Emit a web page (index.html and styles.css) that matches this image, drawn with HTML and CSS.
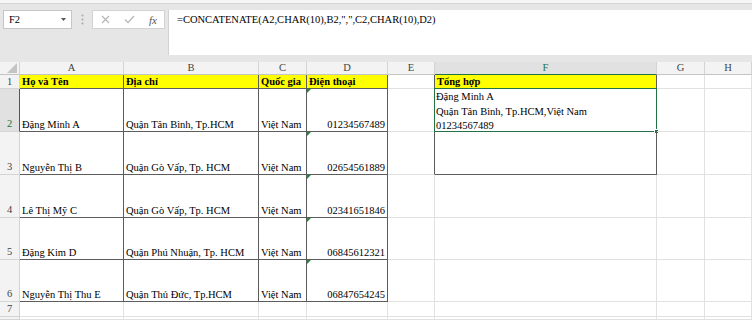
FILE: index.html
```html
<!DOCTYPE html>
<html lang="vi">
<head>
  <meta charset="UTF-8">
  <title>Tổng hợp - CONCATENATE</title>
  <link rel="stylesheet" href="styles.css">
</head>
<body>
  <div class="ribbon"></div>

  <div class="formula-row">
    <div class="namebox">
      <span>F2</span>
      <svg width="5" height="3" viewBox="0 0 5 3"><path d="M0 0h5L2.5 3z" fill="#555"/></svg>
    </div>
    <div class="dots">
      <svg width="3" height="11" viewBox="0 0 3 11">
        <circle cx="1.5" cy="1.5" r="1" fill="#a8a8a8"/>
        <circle cx="1.5" cy="5.5" r="1" fill="#a8a8a8"/>
        <circle cx="1.5" cy="9.5" r="1" fill="#a8a8a8"/>
      </svg>
    </div>
    <div class="fx-btns">
      <svg width="9" height="9" viewBox="0 0 9 9"><path d="M1 1l7 7M8 1L1 8" stroke="#b4b4b4" stroke-width="1.1" fill="none"/></svg>
      <svg width="11" height="9" viewBox="0 0 11 9"><path d="M1 4.5l3 3.2L10 1" stroke="#b4b4b4" stroke-width="1.2" fill="none"/></svg>
      <span class="fx">fx</span>
    </div>
    <div class="formula">=CONCATENATE(A2,CHAR(10),B2,",",C2,CHAR(10),D2)</div>
  </div>

  <div class="sheet">
    <!-- column headers -->
    <div class="h corner">
      <svg width="11" height="10" viewBox="0 0 11 10"><path d="M10 0v10H0z" fill="#c4c4c4"/></svg>
    </div>
    <div class="h">A</div>
    <div class="h">B</div>
    <div class="h">C</div>
    <div class="h">D</div>
    <div class="h">E</div>
    <div class="h sel">F</div>
    <div class="h">G</div>
    <div class="h">H</div>

    <!-- row 1 -->
    <div class="rh mid">1</div>
    <div class="c tb y">Họ và Tên</div>
    <div class="c tb y">Địa chỉ</div>
    <div class="c tb y">Quốc gia</div>
    <div class="c tb y">Điện thoại</div>
    <div class="c edge"></div>
    <div class="c tb y">Tổng hợp</div>
    <div class="c"></div>
    <div class="c"></div>

    <!-- row 2 -->
    <div class="rh sel">2</div>
    <div class="c tb">Đặng Minh A</div>
    <div class="c tb">Quận Tân Bình, Tp.HCM</div>
    <div class="c tb">Việt Nam</div>
    <div class="c tb num">01234567489</div>
    <div class="c edge"></div>
    <div class="c tb wrap">
      Đặng Minh A<br>Quận Tân Bình, Tp.HCM,Việt Nam<br>01234567489
      <div class="selbox"><div class="handle"></div></div>
    </div>
    <div class="c"></div>
    <div class="c"></div>

    <!-- row 3 -->
    <div class="rh">3</div>
    <div class="c tb">Nguyễn Thị B</div>
    <div class="c tb">Quận Gò Vấp, Tp. HCM</div>
    <div class="c tb">Việt Nam</div>
    <div class="c tb num">02654561889</div>
    <div class="c edge"></div>
    <div class="c tb"></div>
    <div class="c"></div>
    <div class="c"></div>

    <!-- row 4 -->
    <div class="rh">4</div>
    <div class="c tb">Lê Thị Mỹ C</div>
    <div class="c tb">Quận Gò Vấp, Tp. HCM</div>
    <div class="c tb">Việt Nam</div>
    <div class="c tb num">02341651846</div>
    <div class="c"></div>
    <div class="c"></div>
    <div class="c"></div>
    <div class="c"></div>

    <!-- row 5 -->
    <div class="rh">5</div>
    <div class="c tb">Đặng Kim D</div>
    <div class="c tb">Quận Phú Nhuận, Tp. HCM</div>
    <div class="c tb">Việt Nam</div>
    <div class="c tb num">06845612321</div>
    <div class="c"></div>
    <div class="c"></div>
    <div class="c"></div>
    <div class="c"></div>

    <!-- row 6 -->
    <div class="rh">6</div>
    <div class="c tb">Nguyễn Thị Thu E</div>
    <div class="c tb">Quận Thủ Đức, Tp.HCM</div>
    <div class="c tb">Việt Nam</div>
    <div class="c tb num">06847654245</div>
    <div class="c"></div>
    <div class="c"></div>
    <div class="c"></div>
    <div class="c"></div>

    <!-- row 7 -->
    <div class="rh mid">7</div>
    <div class="c"></div>
    <div class="c"></div>
    <div class="c"></div>
    <div class="c"></div>
    <div class="c"></div>
    <div class="c"></div>
    <div class="c"></div>
    <div class="c"></div>

    <!-- row 8 (cut off) -->
    <div class="rh"></div>
    <div class="c"></div>
    <div class="c"></div>
    <div class="c"></div>
    <div class="c"></div>
    <div class="c"></div>
    <div class="c"></div>
    <div class="c"></div>
    <div class="c"></div>
  </div>
</body>
</html>
```

FILE: styles.css
```css
* {
  box-sizing: border-box;
}

body {
  margin: 0;
  width: 752px;
  height: 320px;
  overflow: hidden;
  background-color: #fff;
  color: #000;
  font-family: "Liberation Serif", "Times New Roman", serif;
  font-size: 10.5px;
}

/* bottom edge of the ribbon */
.ribbon {
  height: 4px;
  background-color: #f6f6f6;
  border-bottom: 1px solid #d6d6d6;
}

/* name box + formula bar */
.formula-row {
  display: flex;
  align-items: flex-start;
  height: 58px;
  padding: 6px 0 0 3px;
  background-color: #e6e6e6;
}

.namebox {
  display: flex;
  align-items: center;
  justify-content: space-between;
  width: 69px;
  height: 19px;
  padding: 0 5px;
  background-color: #fff;
  border: 1px solid #c6c6c6;
}

.dots {
  display: flex;
  align-items: center;
  justify-content: center;
  width: 20px;
  height: 19px;
}

.fx-btns {
  display: grid;
  grid-template-columns: 24px 24px 24px;
  align-items: center;
  justify-items: center;
  width: 73px;
  height: 19px;
  background-color: #fff;
  border: 1px solid #d2d2d2;
}

.fx {
  font-style: italic;
  font-size: 11px;
  color: #555;
}

.formula {
  flex: 1;
  height: 45px;
  margin-left: 3px;
  padding: 3px 0 0 8px;
  line-height: 14px;
  background-color: #fff;
  border-left: 1px solid #d2d2d2;
  white-space: nowrap;
}

/* worksheet grid */
.sheet {
  display: grid;
  grid-template-columns: 20px 104px 135px 48px 81px 47px 222px 48px 1fr;
  grid-template-rows: 13px 14px 43px 43px 43px 42px 42px 15px 1fr;
  height: 258px;
}

.h {
  text-align: center;
  line-height: 12px;
  color: #444;
  background-color: #f3f3f3;
  border-right: 1px solid #d4d4d4;
  border-bottom: 1px solid #c4c4c4;
}

.h.sel {
  color: #217346;
  background-color: #e1e1e1;
  border-bottom-color: #217346;
}

.corner {
  display: flex;
  align-items: flex-end;
  justify-content: flex-end;
  padding: 0 1px 1px 0;
}

.rh {
  display: flex;
  align-items: flex-end;
  justify-content: center;
  line-height: 14px;
  color: #444;
  background-color: #f3f3f3;
  border-right: 1px solid #d4d4d4;
  border-bottom: 1px solid #d4d4d4;
}

.rh.mid {
  align-items: center;
  line-height: 12px;
}

.rh.sel {
  color: #217346;
  background-color: #e1e1e1;
  border-right-color: #217346;
}

.c {
  position: relative;
  display: flex;
  align-items: flex-end;
  padding: 0 2px;
  line-height: 13px;
  white-space: nowrap;
  border-right: 1px solid #e1e1e1;
  border-bottom: 1px solid #e1e1e1;
}

.c.tb {
  border-right-color: #5c5c5c;
  border-bottom-color: #5c5c5c;
}

.c.edge {
  border-right-color: #5c5c5c;
}

.y {
  font-weight: bold;
  background-color: #ffff00;
}

.num {
  justify-content: flex-end;
}

/* "number stored as text" marker */
.num::before {
  content: "";
  position: absolute;
  top: 0;
  left: 0;
  border-top: 4px solid #1e8a3a;
  border-right: 4px solid transparent;
}

.c.wrap {
  display: block;
  padding: 1px 2px 0 1px;
  line-height: 14.5px;
}

.selbox {
  position: absolute;
  top: -1px;
  left: -1px;
  right: -1px;
  bottom: -1px;
  border: 1px solid #217346;
}

.handle {
  position: absolute;
  right: -3px;
  bottom: -3px;
  width: 5px;
  height: 5px;
  background-color: #217346;
  border: 1px solid #fff;
}
```
